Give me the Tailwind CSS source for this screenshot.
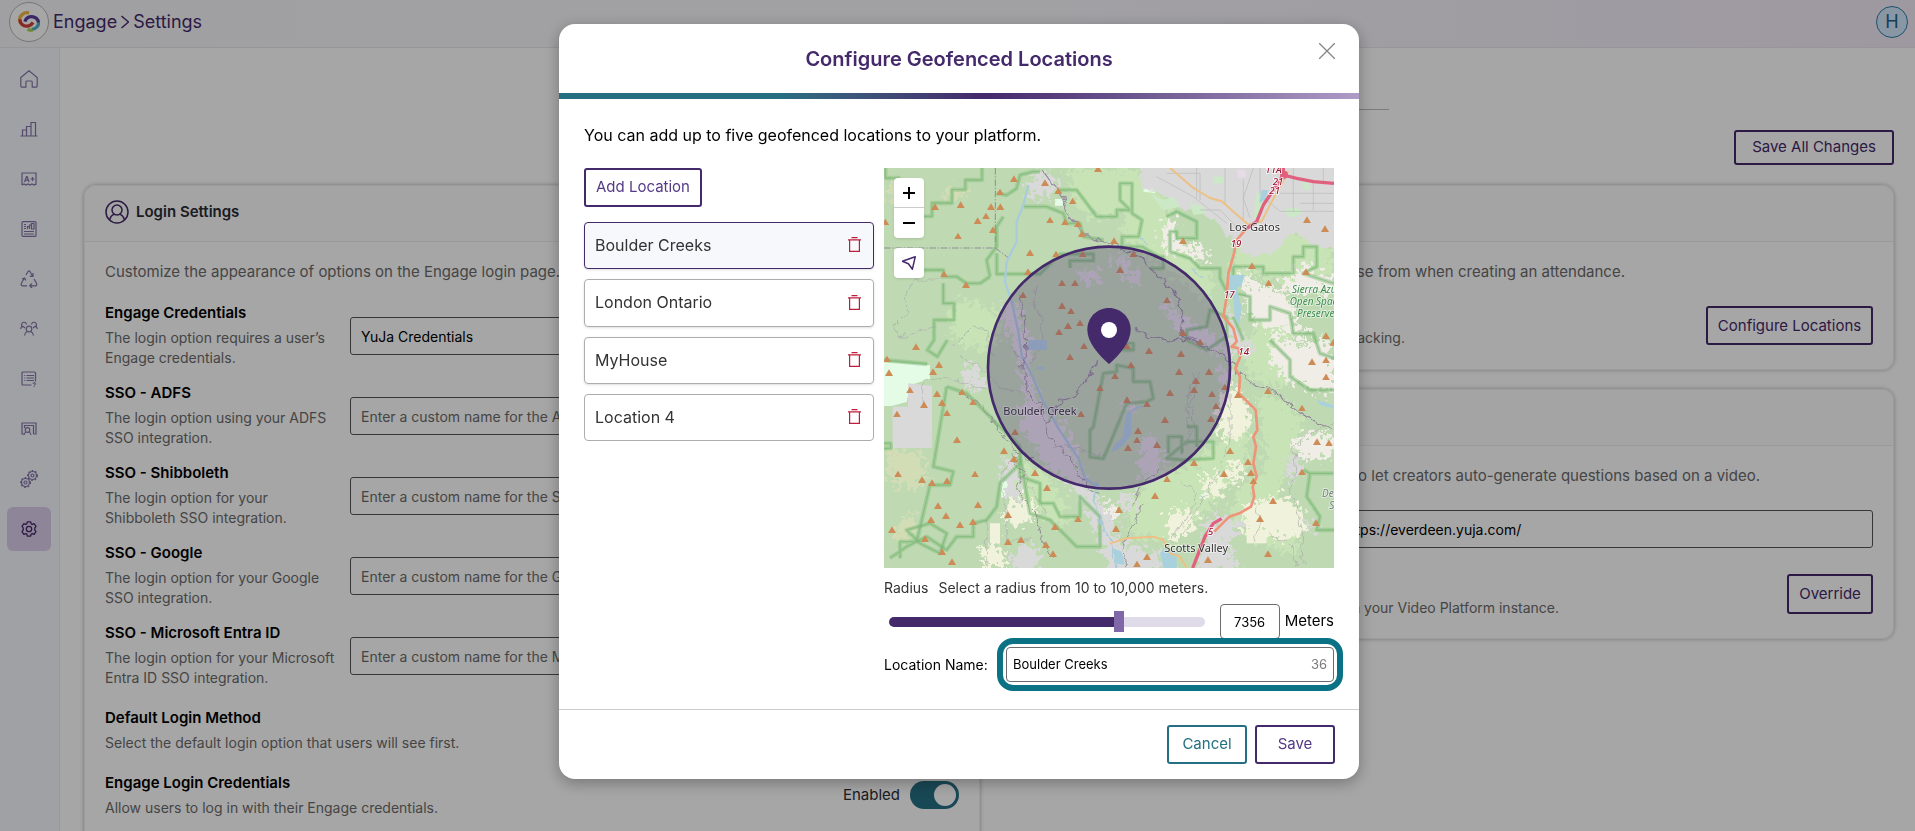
<!DOCTYPE html>
<html lang="en">
  <head>
    <meta charset="UTF-8" />
    <title>Engage - Settings</title>
    <script src="https://cdn.jsdelivr.net/npm/@tailwindcss/browser@4"></script>
  </head>
  <body class="flex h-screen flex-col overflow-hidden bg-white font-['Inter',sans-serif] text-black">
    <header class="flex h-12 shrink-0 items-center justify-between border-b border-[#e6e6ea] bg-linear-to-r from-[#f6f6fb] via-[#f8f8fc] to-[#f3ebf8] pr-[7px] pb-2.5 pl-[9px]">
      <div class="flex items-center gap-1 pt-1.5 text-lg text-[#44296b]">
        <a href="#" aria-label="Home" class="flex size-10 items-center justify-center rounded-full border border-[#b5b5b5] bg-white">
          <svg class="size-[22px]" viewBox="0 0 24 24" fill="none" stroke-width="3.6">
            <path d="M12 2C6 1 2 5 1.800 9c0 3 1.200 5 3.500 6" stroke="#f0b73c" />
            <path d="M2 9c0 5 4 8 8 7.500 3-.3 5-2 6.500-4" stroke="#d2403a" />
            <path d="M15 20c5-.5 8-4 7.500-9" stroke="#4fb0c6" />
            <path d="M16 20.500c-2 .5-4 .3-5.500-.5" stroke="#a5cf4c" />
            <path d="M7.500 11.500c1-4 5-6 9-5 3.500.8 5.500 3 5.700 6" stroke="#5b3d9b" />
          </svg>
        </a>
        <a href="#">Engage</a>
        <svg class="h-4 w-2" viewBox="0 0 8 16" fill="none" stroke="#44296b" stroke-width="1.500"><path d="M.5 2l7 6-7 6" /></svg>
        <span>Settings</span>
      </div>
      <button class="mt-1.5 flex size-8 items-center justify-center rounded-full border-[1.500px] border-[#2b7fa8] bg-[#d3e6fa] text-lg text-[#1f6086]">H</button>
    </header>

    <div class="flex min-h-0 flex-1">
      <nav class="flex w-[60px] shrink-0 flex-col items-center gap-1.5 border-r border-[#ececf0] bg-[#f4f7fd] pt-[9px] pr-px text-[#8474a8]">
        <a href="#" aria-label="Home" class="flex size-11 items-center justify-center">
          <svg class="size-[18px]" viewBox="0 0 18 18" fill="none" stroke="currentColor" stroke-width="1.200"><path d="M.8 7.500L9 .8l8.200 6.700v8.600a1 1 0 01-1 1h-4V12a1 1 0 00-1-1H6.900a1 1 0 00-1 1v5.100H1.800a1 1 0 01-1-1z" /></svg>
        </a>
        <a href="#" aria-label="Analytics" class="flex size-11 items-center justify-center">
          <svg class="size-[18px]" viewBox="0 0 18 18" fill="none" stroke="currentColor" stroke-width="1.200"><path d="M.5 16h17M2.500 16v-6h4v6M6.500 16V6.500h4.500V16M11 16V2.500h4.500V16" /></svg>
        </a>
        <a href="#" aria-label="Gradebook" class="flex size-11 items-center justify-center">
          <svg class="size-4" viewBox="0 0 16 16" fill="none" stroke="currentColor" stroke-width="1.200"><path d="M1 14V2h14v12M1 14l2-1 2 1 2-1 2 1 2-1 2 1 2-1M3.500 11l2-5.500h.6l2 5.500M4.200 9.200h3.200M9.500 8h4M11.500 6v4" /></svg>
        </a>
        <a href="#" aria-label="Reports" class="flex size-11 items-center justify-center">
          <svg class="size-4" viewBox="0 0 16 16" fill="none" stroke="currentColor" stroke-width="1.200"><rect x="1" y=".6" width="14" height="14.800" rx="1" /><path d="M3 3.500h2M3 5.500h2M3 7.500h2M6.500 8V5.500h2V8M8.500 8V4h2v4M10.500 8V2.500H13V8zM3 10.500h10M3 13h10" /></svg>
        </a>
        <a href="#" aria-label="Recycle" class="flex size-11 items-center justify-center">
          <svg class="size-[18px]" viewBox="0 0 18 18" fill="none" stroke="currentColor" stroke-width="1.200"><path d="M6 5l2-3.500q1-1.200 2 0L12.500 6M13 3v3.300H9.800M4.500 8L1.500 13q-1 2.500 1 2.800H7M2 9l2.700-1 1 2.500M14 9l2.500 4.200q.8 2.600-1.500 2.600H10M12 13.500l-2.300 2.300L12 18" /></svg>
        </a>
        <a href="#" aria-label="Groups" class="flex size-11 items-center justify-center">
          <svg class="size-[18px]" viewBox="0 0 18 18" fill="none" stroke="currentColor" stroke-width="1.200"><circle cx="9" cy="9" r="2.800" /><path d="M4.500 15.500q.5-3 2.700-4M13.500 15.500q-.5-3-2.700-4M2.200 6.500A2.500 2.500 0 116.500 4.500M15.800 6.500a2.500 2.500 0 10-4.300-2M.6 9q.2-2.300 2.400-2.600L5 8M17.400 9q-.2-2.300-2.400-2.600L13 8" /></svg>
        </a>
        <a href="#" aria-label="Quizzes" class="flex size-11 items-center justify-center">
          <svg class="size-4" viewBox="0 0 16 16" fill="none" stroke="currentColor" stroke-width="1.200"><path d="M10.500 14H2a1 1 0 01-1-1V2a1 1 0 011-1h11.500a1 1 0 011 1v8.500M3.200 4.500h1M5.500 4.500H13M3.200 7h1M5.500 7H13M3.200 9.500h1M5.500 9.500H13M11.800 12.500q1.500-1.500 2.500 0 .3 1-1 1.500M13.200 14.800v1" /></svg>
        </a>
        <a href="#" aria-label="Classroom" class="flex size-11 items-center justify-center">
          <svg class="size-4" viewBox="0 0 16 16" fill="none" stroke="currentColor" stroke-width="1.200"><path d="M3.500 13H1V2h14v11h-2.500M12.500 13V4.500h-9V7" /><circle cx="6.500" cy="9" r="2.300" /><path d="M3 14q.5-2.500 2-3M10 14q-.5-2.500-2-3" /></svg>
        </a>
        <a href="#" aria-label="Integrations" class="flex size-11 items-center justify-center">
          <svg class="size-[18px]" viewBox="0 0 18 18" fill="none" stroke="currentColor" stroke-width="1.200"><circle cx="12.500" cy="5.500" r="4" /><circle cx="12.500" cy="5.500" r="1.500" /><circle cx="5.500" cy="12.500" r="4" /><circle cx="5.500" cy="12.500" r="1.500" /><g stroke-dasharray="1.700 1.900"><circle cx="12.500" cy="5.500" r="4.900" /><circle cx="5.500" cy="12.500" r="4.900" /></g></svg>
        </a>
        <a href="#" aria-label="Settings" class="flex size-11 items-center justify-center rounded-md bg-[#dccdea] text-[#44296b]">
          <svg class="size-4" viewBox="0 0 16 16" fill="none" stroke="currentColor" stroke-width="1.300" stroke-linejoin="round"><circle cx="8" cy="8" r="2.700" /><path d="M6.300.9h3.400l.5 1.900 1.200.6 1.700-.7 1.900 2.600-1.200 1.500v2.400l1.200 1.500-1.900 2.600-1.700-.7-1.200.6-.5 1.900H6.300l-.5-1.900-1.200-.6-1.700.7L1 10.700l1.200-1.500V6.800L1 5.300l1.900-2.600 1.700.7 1.200-.6z" /></svg>
        </a>
      </nav>

      <main class="min-w-0 flex-1 overflow-hidden pr-[21px] pl-6 text-[15px] leading-6">
        <div class="mx-auto h-[62px] w-full max-w-[800px] border-b border-[#bdbdbd]"></div>
        <div class="mt-5 flex justify-end">
          <button class="flex h-[35px] w-40 items-center justify-center rounded-[3px] border-2 border-[#44296b] pb-0.5 text-[#44296b]">Save All Changes</button>
        </div>
        <div class="mt-5 grid grid-cols-2 items-start gap-[18px]">
          <section class="overflow-hidden rounded-xl border border-[#f0f0f0] pb-10 shadow-[0_0_4px_rgba(0,0,0,0.3)]">
            <h2 class="flex h-14 items-center gap-[7px] border-b border-[#ededed] bg-[#fcfcfc] px-5 pb-1 font-semibold text-[#2b2b33]">
              <svg class="size-6" viewBox="0 0 24 24" fill="none" stroke="#44296b" stroke-width="1.500"><circle cx="12" cy="12" r="11" /><circle cx="12" cy="10" r="5" /><path d="M4.500 20c1-3.500 3-5.300 5-5.700M19.500 20c-1-3.500-3-5.300-5-5.700" /></svg>
              Login Settings
            </h2>
            <div class="px-5 pt-[18px]">
              <p class="text-[#6b6b6b]">Customize the appearance of options on the Engage login page.</p>
              <div class="mt-[18px] flex flex-col gap-3.5">
                <div class="grid grid-cols-[245px_1fr] items-center">
                  <div>
                    <label for="engage-name" class="block leading-[22px] font-semibold">Engage Credentials</label>
                    <p class="mt-1 max-w-[232px] text-sm leading-5 text-[#6b6b6b]">The login option requires a user’s Engage credentials.</p>
                  </div>
                  <input id="engage-name" type="text" value="YuJa Credentials" class="mt-0.5 h-[38px] w-full rounded-[3px] border border-[#555] px-2.5 text-sm" />
                </div>
                <div class="grid grid-cols-[245px_1fr] items-center">
                  <div>
                    <label for="adfs-name" class="block leading-[22px] font-semibold">SSO - ADFS</label>
                    <p class="mt-1 max-w-[232px] text-sm leading-5 text-[#6b6b6b]">The login option using your ADFS SSO integration.</p>
                  </div>
                  <input id="adfs-name" type="text" placeholder="Enter a custom name for the ADFS" class="mt-0.5 h-[38px] w-full rounded-[3px] border border-[#555] px-2.5 text-sm placeholder:text-[#6b6b6b]" />
                </div>
                <div class="grid grid-cols-[245px_1fr] items-center">
                  <div>
                    <label for="shibboleth-name" class="block leading-[22px] font-semibold">SSO - Shibboleth</label>
                    <p class="mt-1 max-w-[232px] text-sm leading-5 text-[#6b6b6b]">The login option for your<br />Shibboleth SSO integration.</p>
                  </div>
                  <input id="shibboleth-name" type="text" placeholder="Enter a custom name for the Shibboleth" class="mt-0.5 h-[38px] w-full rounded-[3px] border border-[#555] px-2.5 text-sm placeholder:text-[#6b6b6b]" />
                </div>
                <div class="grid grid-cols-[245px_1fr] items-center">
                  <div>
                    <label for="google-name" class="block leading-[22px] font-semibold">SSO - Google</label>
                    <p class="mt-1 max-w-[232px] text-sm leading-5 text-[#6b6b6b]">The login option for your Google SSO integration.</p>
                  </div>
                  <input id="google-name" type="text" placeholder="Enter a custom name for the Google" class="mt-0.5 h-[38px] w-full rounded-[3px] border border-[#555] px-2.5 text-sm placeholder:text-[#6b6b6b]" />
                </div>
                <div class="grid grid-cols-[245px_1fr] items-center">
                  <div>
                    <label for="entra-name" class="block leading-[22px] font-semibold">SSO - Microsoft Entra ID</label>
                    <p class="mt-1 max-w-[232px] text-sm leading-5 text-[#6b6b6b]">The login option for your Microsoft Entra ID SSO integration.</p>
                  </div>
                  <input id="entra-name" type="text" placeholder="Enter a custom name for the Microsoft" class="mt-0.5 h-[38px] w-full rounded-[3px] border border-[#555] px-2.5 text-sm placeholder:text-[#6b6b6b]" />
                </div>
              </div>
              <h3 class="mt-[19px] leading-[22px] font-semibold">Default Login Method</h3>
              <p class="mt-1 text-sm leading-5 text-[#6b6b6b]">Select the default login option that users will see first.</p>
              <div class="mt-[19px] flex items-center justify-between">
                <div>
                  <h3 class="leading-[22px] font-semibold">Engage Login Credentials</h3>
                  <p class="mt-1 text-sm leading-5 text-[#6b6b6b]">Allow users to log in with their Engage credentials.</p>
                </div>
                <label class="flex items-center gap-2.5 text-[#2b2b33]">
                  Enabled
                  <input type="checkbox" checked class="h-7 w-[49px] appearance-none rounded-full bg-[#266f83] p-[3px] before:ml-auto before:block before:size-[22px] before:rounded-full before:bg-white" />
                </label>
              </div>
            </div>
          </section>

          <div class="flex flex-col gap-[19px]">
            <section class="overflow-hidden rounded-xl border border-[#f0f0f0] pb-[21px] shadow-[0_0_4px_rgba(0,0,0,0.3)]">
              <div class="h-14 border-b border-[#ededed] bg-[#fcfcfc]"></div>
              <div class="px-5 pt-[18px]">
                <p class="mr-[248px] text-right text-[#6b6b6b]">choose from when creating an attendance.</p>
                <div class="mt-[22px] flex items-start justify-end">
                  <p class="mt-[22px] mr-[301px] text-sm leading-5 text-[#6b6b6b]">tracking.</p>
                  <button class="flex h-[39px] w-[167px] items-center justify-center rounded-[3px] border-2 border-[#44296b] text-[#44296b]">Configure Locations</button>
                </div>
              </div>
            </section>
            <section class="overflow-hidden rounded-xl border border-[#f0f0f0] pb-5 shadow-[0_0_4px_rgba(0,0,0,0.3)]">
              <div class="h-14 border-b border-[#ededed] bg-[#fcfcfc]"></div>
              <div class="px-5 pt-[18px]">
                <p class="mr-[113px] text-right text-[#6b6b6b]">to let creators auto-generate questions based on a video.</p>
                <div class="mt-[22px] flex justify-end">
                  <input type="text" aria-label="Video Platform URL" value="https://everdeen.yuja.com/" class="h-[38px] w-[541px] rounded-[3px] border border-[#555] px-2.5 text-sm" />
                </div>
                <div class="mt-[26px] flex items-start justify-end">
                  <p class="mt-6 mr-[228px] text-sm leading-5 text-[#6b6b6b]">in your Video Platform instance.</p>
                  <button class="flex h-10 w-[86px] items-center justify-center rounded-[3px] border-2 border-[#44296b] text-[#44296b]">Override</button>
                </div>
              </div>
            </section>
          </div>
        </div>
      </main>
    </div>

    <!-- Modal -->
    <div class="fixed inset-0 flex items-start justify-center bg-black/35 pt-6 pl-[3px]">
      <div role="dialog" aria-modal="true" aria-labelledby="dialog-title" class="w-full max-w-[800px] rounded-2xl bg-white shadow-[0_4px_16px_rgba(0,0,0,0.3)]">
        <div class="grid h-[69px] grid-cols-[1fr_auto_1fr] items-center px-6">
          <h1 id="dialog-title" class="col-start-2 text-xl font-semibold text-[#44296b]">Configure Geofenced Locations</h1>
          <button aria-label="Close" class="mb-4 justify-self-end">
            <svg class="size-4" viewBox="0 0 16 16" stroke="#858585" stroke-width="1.300"><path d="M0 0l16 16M16 0L0 16" /></svg>
          </button>
        </div>
        <div class="h-1.5 bg-linear-to-r from-[#266f83] from-27% via-[#44296b] via-53% to-[#ad9cc6]"></div>

        <div class="px-[25px] pt-6 pb-[27px]">
          <p>You can add up to five geofenced locations to your platform.</p>
          <div class="mt-[21px] grid grid-cols-[290px_1fr] items-start gap-2.5">
            <div>
              <button class="flex h-[39px] w-[118px] items-center justify-center rounded-[3px] border-2 border-[#44296b] text-[15px] text-[#553a85]">Add Location</button>
              <ul class="mt-[15px] flex flex-col gap-2.5 text-base text-[#333]">
                <li class="flex h-[47px] items-center justify-between rounded-sm border border-[#44296b] bg-[#f7f8fb] pr-3 pb-0.5 pl-2.5 shadow-sm">
                  Boulder Creeks
                  <button aria-label="Delete Boulder Creeks"><svg class="h-[15px] w-[13px]" viewBox="0 0 13 15" fill="none" stroke="#be1e3c" stroke-width="1.200"><path d="M3.500.7h6M0 2.800h13M1.600 3v11.300h9.800V3" /></svg></button>
                </li>
                <li class="flex h-12 items-center justify-between rounded-sm border border-[#adadad] pr-3 pb-0.5 pl-2.5 shadow-sm">
                  London Ontario
                  <button aria-label="Delete London Ontario"><svg class="h-[15px] w-[13px]" viewBox="0 0 13 15" fill="none" stroke="#be1e3c" stroke-width="1.200"><path d="M3.500.7h6M0 2.800h13M1.600 3v11.300h9.800V3" /></svg></button>
                </li>
                <li class="flex h-[47px] items-center justify-between rounded-sm border border-[#adadad] pr-3 pb-0.5 pl-2.5 shadow-sm">
                  MyHouse
                  <button aria-label="Delete MyHouse"><svg class="h-[15px] w-[13px]" viewBox="0 0 13 15" fill="none" stroke="#be1e3c" stroke-width="1.200"><path d="M3.500.7h6M0 2.800h13M1.600 3v11.300h9.800V3" /></svg></button>
                </li>
                <li class="flex h-[47px] items-center justify-between rounded-sm border border-[#adadad] pr-3 pb-0.5 pl-2.5">
                  Location 4
                  <button aria-label="Delete Location 4"><svg class="h-[15px] w-[13px]" viewBox="0 0 13 15" fill="none" stroke="#be1e3c" stroke-width="1.200"><path d="M3.500.7h6M0 2.800h13M1.600 3v11.300h9.800V3" /></svg></button>
                </li>
              </ul>
            </div>

            <div>
              <div class="relative">
                <svg class="block w-full" viewBox="12 24 1350 1200" fill="none">
                  <defs>
                    <marker id="peak" markerUnits="userSpaceOnUse" markerWidth="24" markerHeight="20" refX="12" refY="10"><path d="M12 0L24 20H0z" fill="#cd8b56" /></marker>
                    <filter id="ragged" x="-10%" y="-10%" width="120%" height="120%">
                      <feTurbulence type="fractalNoise" baseFrequency="0.06" numOctaves="3" seed="4" />
                      <feDisplacementMap in="SourceGraphic" scale="90" xChannelSelector="R" yChannelSelector="G" />
                    </filter>
                    <filter id="wavy" x="-10%" y="-10%" width="120%" height="120%">
                      <feTurbulence type="fractalNoise" baseFrequency="0.04" numOctaves="2" seed="9" />
                      <feDisplacementMap in="SourceGraphic" scale="30" xChannelSelector="R" yChannelSelector="G" />
                    </filter>
                    <!-- park boundaries -->
                    <g id="parks">
                      <path d="M16 24v30h40v100l40 15h60v-40h60v-40h40V60h50V24M350 100l30 5 30-20 10-40 40-10 20 0" />
                      <path d="M430 140l70 0 50 20 10 30 40 0 10 40 60 10M350 280v62h130l60-60h100v20h-70v22M540 90l50 0 60 80 60 0v-20h40l-30-30v-50h36v90l30 20-10 50h-50v30h60l50 30" />
                      <path d="M860 170l30-15 60 30v50h-60v-20l-20 0v60l60 20 30 30h60v30l20 40" />
                      <path d="M1060 320h90v20h90v-50h30v-30h40v60l-40 20 90 30M1060 320v80l50 10v70h60v-40l60 20 10 60h60l20 60 60 20M1060 470l30 70M1170 540l60 60v50l60 40h72" />
                      <path d="M12 600l130 12M200 680l-40 240 60 15-10 40-60 0-40 170-50 0 0 50M200 680l60 20 100 100 60 60v50l-60 60-10 70-30 40-40 10v40h-50l-30 40-60-40-60 30-50 34" />
                      <path d="M330 350l-30 20-40 0-30-20h-40v-20h-60M190 370v60h32v50h-60v60l-20 30 30 20 30-50M330 350l-10-50 30-40v-60l20-30" />
                      <path d="M420 890v60l60 20v60h40l20 40h60v-60l60 60v90h-70l-40-40-40-40-60-20z" />
                      <path d="M670 640l40-5v-20l50 10v40h50l10 50-20 10-60 5-50 120-20 46-40-5v-80l10-10zM730 550h30v20h-30zM860 895l60-50h80v50l-90 5zM865 880v-50h40v50M920 800h30v60" />
                      <path d="M920 540v-30l60-10 10-50 50 20 0 60-60 40zM820 290l30 0 0 35-40 0M1270 930l20 10 70 0M1290 940l-10 70 40 60-10 40 52 0M12 850l20 0 0 15-20 0M80 1110l70-20 50 30-20 60-60-30z" />
                    </g>
                  </defs>
                  <rect x="12" y="24" width="1350" height="1200" fill="#bfdab3" />

                  <g filter="url(#ragged)">
                    <!-- scrub and open ground -->
                    <g fill="#c8e4b6">
                      <path d="M560 24h200l60 40 60 90-60 60-90-60-80 20-60-30zM230 420l80 10 60 60-40 90-90-30-40-60z" />
                      <path d="M790 60l90 130-30 40 100 80 60 60-30 60-80-80-110-60-70-80zM1070 240l100-60 192 90v110l-130-10-120-40-60 60zM1090 560l60-90 90 50 30 130-70 40-100-50z" />
                      <path d="M400 900l90 30 60 90 20 60-30 20-80-60-60-60zM1040 700l70 60-10 150-60 80-90 100-80 60-120-30 10-90 60-90 120-30 80-60zM1130 700l80 20 60 60-40 110-40 120 70 60-10 110-120-30-80-70 20-90 90-60z" />
                    </g>
                    <g fill="#f0ede6">
                      <path d="M860 170l30 20-10 30 50 40 20-20 40 50-30 10-50-20-40 10-30-50zM1090 330l60 50 50 10 50 60-20 20 50 40-20 30-60-40-50 10-50-60zM1180 520l60 30 90-10 32 40v110l-50 10-40-30-60-10-40-60zM1200 370l80-60 60 50 22-20v60l-70-10-60 20z" />
                      <path d="M1250 830l70-20 42 30v50l-60 10-60-20zM640 1040l60-10 20 40-60 20z" />
                    </g>
                    <g fill="#f1f2dc">
                      <path d="M1040 680l40 10 30 80-20 60-60 10-20-60zM1090 1030l130-20 60 50-20 70-70 10-60-30-40 20zM860 1070l50-30 40 30-20 50-60 20zM410 1010l50 20 10 50-60 10-50-20zM300 1160l60-10 20 74h-70zM960 960l60-20 20 50-50 30zM1050 900l40 10-10 60-40-10z" />
                    </g>
                    <g fill="#d2ddb5"><path d="M24 860l90 20 30 60-50 50-70-30zM60 1080l40-20 20 50-50 40-30-20zM30 60l60 0 40 40-60 30-50-20zM200 80l60 10-10 30-60-10z" /></g>
                  </g>

                  <!-- fields -->
                  <path fill="#f1f2dc" d="M1050 760h36v70h-36zM870 1080h40v40h-40zM1140 1030h90v30h-90zM1100 1110h60v40h-60zM390 1060h40v30h-40zM330 1090h30v60h-30z" />
                  <path fill="#e4fbe6" d="M12 606l138 10v40l-60 20-10 50-45 12H12zM525 117h26v20h-26zM795 65l40 5-10 30-35-5zM360 960l25 5-5 40-15 10zM965 1000l15-5-5 25-15-5z" />
                  <path fill="#d9d9d9" d="M38 740h46v-70l72 8v186H38z" />

                  <!-- built-up areas -->
                  <path fill="#d9d9d9" filter="url(#wavy)" d="M770 0h612v270l-80-10-60-50-60 70-80 10-50-60-60-60-90-30-60-40-60-20z" />
                  <g fill="#d9d9d9" filter="url(#ragged)">
                    <path d="M455 50l40-20 35 30-5 45-30-10-15 25-30-15zM1040 430l30 60 50 60-10 40-40-10-30-60z" />
                    <path d="M360 440l50-20 20 100 30 10-10 100 10 60 50 80 60 60 30 110 40 60-20 40-40-60-80-60-60-80-20-60 20-80-20-70zM240 630l40-20 40 50-20 40-40-20zM370 890l40 10 10 110-30 10-20-60zM600 980l50 30 50 70 10 60 80 30 60 20 40 50H700l-40-90zM970 1090l70-30 50 40-50 50 40 84H950l20-100z" />
                    <path d="M410 1150l60 10 10 50-50 34h-40zM780 830l50 0 20 90-50 60-20-60zM1230 880l40 20-20 60-30-10zM1270 1080l50 5-10 25-30-5zM700 290l40 0 40 70-30 20zM730 1000l30-10 0 60-30 10z" />
                    <path d="M600 320l50 10 20 40-60 0zM860 410l50 70 60 20 80 70-20 20-110-50-70-90zM500 780l50 0 20 50-40 20zM720 730l40 0 10 20-40 10zM1010 620l40 10 0 50-30-10z" />
                  </g>
                  <g fill="#cbe9c6"><path d="M1130 100l30-10-20 70-20 20zM810 100l40 20 30-10 20 30-50 10zM930 130l40 10 10 20-40 5zM1210 150l40-10 20 20-40 15zM1000 50l30 0 0 20-30 0zM1270 60l20 0 0 30-20 0z" /></g>
                  <g fill="#e6dbe6"><path d="M1070 30l25 0 5 20-25 5zM1185 50l20 30-10 20-15-25z" /></g>

                  <!-- street grid -->
                  <g stroke="#b9b9b9" stroke-width="2">
                    <path d="M860 40l100 0v80M950 24v90M1035 24v110M1090 60v120M1140 24v80l60 50h162M1240 24v130M1300 60v90M1330 24v50M1200 100h162M1260 130h102M830 50l110 60 100 80M960 150l60 0 70 70M1120 24l-30 90 20 60" />
                  </g>
                  <g stroke="#ababab" stroke-width="2" filter="url(#wavy)">
                    <path d="M80 390l30-30h80M80 390l0 70-40 40 20 30 60-20 50-10M130 740v-80l60-5 40 5 90 30M220 560l60-60 40 10 20 70M240 590l60 30 60 60 60 20M390 560l50 60 30-30 20-90-30-80 10-40M940 640l-20 90 10 120" />
                    <path d="M400 890l-40 60 10 80 20 40M420 880l20 90 60 90M520 860l90 10 70 20M960 640l-30 90 10 90-40 60M1050 700l0 140-30 90-60 100-50 90M1360 790l-60 20-60 50 10 70-20 60 30 80 10 140M1110 1000l30 80-20 70M900 960l50 40-20 60-60 80M320 1080v140M380 1080v60h80M1170 1130l60 20 20 70" />
                  </g>

                  <use href="#parks" stroke="#82bd7c" stroke-opacity=".45" stroke-width="13" stroke-linejoin="round" />
                  <use href="#parks" stroke="#78b574" stroke-opacity=".6" stroke-width="4" stroke-linejoin="round" />
                  <g stroke="#8f8f97" stroke-width="3" stroke-dasharray="20 5 4 5"><path d="M346 24v240M12 264h334M346 264l40 30" /></g>

                  <!-- water -->
                  <g stroke="#a9cbdc" stroke-width="5" stroke-linejoin="round">
                    <path d="M445 75l-15 60-20 50 0 60-30 60-5 60 20 60 20 90 10 70 30 60 30 70 50 90 60 90 20 60 30 20" stroke-width="7" />
                    <path d="M650 970l-10 50 20 60 30 60 20 84M780 235l20 20M940 330l30 20" filter="url(#wavy)" />
                  </g>
                  <path fill="#a9d0dd" d="M1050 345l45 0-10 30-15 10 15 60-8 50-12-20-5-60-15-20zM692 880l12-25 25-25 10-70 30-20 30-5-45 20 0 70-30 35zM1145 90l20 0-10 30-18 10zM1310 720l50 15v10l-40-10zM445 540h55v30h-55zM470 620l25 0-10 10-20-5zM840 1180l20-20 30 20 0 44h-40zM700 1165l25 10 10 40-30-5z" />

                  <!-- roads -->
                  <g stroke="#968c9e" stroke-width="4" stroke-linejoin="round" filter="url(#wavy)">
                    <path d="M490 36l50 60 30 80 40 40 40 25 50 10 80 40 50 50 60 70 20 50-10 60 60 30 50 20 60 60 60 50 60 20 70 60 100 50M760 502l50 30 80 10 60-10M500 792l30-60 60-30 40-60 20-40" />
                    <path d="M420 410l10 60 10 130-15 20 20 70 40 60 20 80 60 60 50 90 40 20" stroke-width="3" />
                  </g>
                  <g stroke="#929292" stroke-width="3" filter="url(#wavy)"><path d="M240 700l60 30 60 80 40 60 60 30M790 1030l-30 60-30 60 10 74M760 1040l20-60 60-50M390 880l40 60-20 50 50 60 30 90 30 60" /></g>
                  <g stroke="#eec083" stroke-width="6" stroke-linejoin="round"><path d="M870 24l70 60 50 30 35 10 80 70 40-10 20-40 60-110M690 1150l50-15 80-5 30 10 20 40 30 10 20 34" /></g>
                  <g stroke="#ee9478" stroke-width="8" stroke-linejoin="round"><path d="M1100 205l-30 35-8 40-17 60-5 70-10 60 30 35 10 40-15 15 20 5 6 25-15 35 14 25-3 50 50 50 5 60-12 20 8 30-8 50 10 40-12 30 5 30-10 30-35 20-30 10-45 45" /></g>
                  <g stroke="#e0607e" stroke-width="10" stroke-linejoin="round"><path d="M1100 205l30-20 20-50 40-60 20-30 40 10 50 10 62 5M1210 24v20M1025 1076l-25 14-25 40-37 94" /></g>
                  <circle cx="1212" cy="44" r="12" fill="#e0607e" />

                  <polyline stroke="none" marker-start="url(#peak)" marker-mid="url(#peak)" marker-end="url(#peak)" points="654,26 402,56 495,68 535,92 360,96 165,140 242,134 333,140 361,140 318,168 293,182 339,209 234,228 16,186 578,123 510,180 555,186 594,191 606,221 702,242 909,242 1281,179 1335,206 450,278 528,282 608,282 760,282 444,335 192,342 258,374 720,329 1116,317 1278,335 1166,369 546,369 585,369 429,405 861,420 546,437 573,453 600,489 564,497 537,516 909,518 960,546 612,558 741,558 570,591 807,572 903,581 753,615 1338,527 1360,547 1296,605 1338,600 1338,651 108,560 21,597 27,638 177,614 159,635 705,648 897,635 987,635 948,662 942,689 660,684 1035,681 870,698 996,702 1074,704 1164,692 90,690 171,701 186,728 246,696 279,726 132,734 201,759 51,762 741,719 801,732 1008,738 1266,744 993,776 855,779 603,762 231,839 405,816 774,812 771,840 744,863 831,854 372,872 402,896 1050,872 1311,845 1347,849 942,908 54,942 126,959 156,968 201,962 285,942 465,938 501,983 861,957 1032,941 1104,905 1113,938 1120,963 1266,936 825,1007 174,1037 294,1034 198,1067 153,1079 240,1094 279,1085 384,1064 36,1109 717,1049 594,1077 525,1100 708,1106 1179,1022 1140,1076 1308,1088 135,1136 423,1139 384,1145 498,1154 186,1175 519,1181 216,1205 801,1190 771,1212 984,1199 1164,1181" />

                  <g font-family="'Noto Sans', sans-serif" font-size="33" fill="#2f2f2f" stroke="#ffffff" stroke-opacity=".6" stroke-width="5" paint-order="stroke">
                    <text x="1048" y="213">Los Gatos</text>
                    <text x="370" y="765">Boulder Creek</text>
                    <text x="853" y="1176">Scotts Valley</text>
                    <g font-style="italic" font-size="30" fill="#3a8c4c">
                      <text x="1236" y="398">Sierra Azul</text>
                      <text x="1229" y="434">Open Space</text>
                      <text x="1251" y="470">Preserve</text>
                      <g fill="#6f8078"><text x="1326" y="1012">De L</text><text x="1348" y="1047">Sta</text></g>
                    </g>
                    <g font-style="italic" font-size="29" font-weight="500" fill="#9c1535" stroke-opacity=".9">
                      <text x="1156" y="39">11A</text>
                      <text x="1178" y="75">21</text>
                      <text x="1168" y="103">21</text>
                      <text x="1052" y="261">19</text>
                      <text x="1032" y="413">17</text>
                      <text x="1075" y="585">14</text>
                      <text x="984" y="1125">5</text>
                    </g>
                  </g>

                  <circle cx="687" cy="623" r="363" fill="#44296b" fill-opacity=".3" stroke="#44296b" stroke-width="8" />
                  <path fill="#44296b" d="M687 444c36 0 65 29 65 65 0 38-34 76-65 103-31-27-65-65-65-103 0-36 29-65 65-65z" />
                  <circle cx="687" cy="510" r="24" fill="#fff" />
                </svg>
                <div class="absolute top-2.5 left-2.5 flex w-[30px] flex-col gap-2.5">
                  <div class="flex flex-col divide-y divide-[#ccc] rounded-sm bg-white shadow">
                    <button aria-label="Zoom in" class="flex h-[30px] items-center justify-center"><svg class="size-3" viewBox="0 0 12 12" stroke="#000" stroke-width="2"><path d="M0 6h12M6 0v12" /></svg></button>
                    <button aria-label="Zoom out" class="flex h-[30px] items-center justify-center"><svg class="size-3" viewBox="0 0 12 12" stroke="#000" stroke-width="2"><path d="M0 6h12" /></svg></button>
                  </div>
                  <button aria-label="My location" class="flex h-[30px] items-center justify-center rounded-sm bg-white shadow"><svg class="size-3.5" viewBox="0 0 14 14" fill="none" stroke="#44296b" stroke-width="1.500" stroke-linejoin="round"><path d="M13.200.8L.4 5.200l6 2.600 4 5.400z" /></svg></button>
                </div>
              </div>

              <div class="mt-2.5 flex gap-2.5 text-sm text-[#333]">
                <label for="radius">Radius</label>
                <p>Select a radius from 10 to 10,000 meters.</p>
              </div>
              <div class="mt-1.5 flex items-center">
                <input id="radius" type="range" min="10" max="10000" value="7356" class="mr-[15px] ml-[5px] h-2.5 min-w-0 flex-1 appearance-none rounded-full bg-linear-to-r from-[#44296b] from-73% to-[#e0dbe9] to-73% [&::-webkit-slider-thumb]:h-[21px] [&::-webkit-slider-thumb]:w-2.5 [&::-webkit-slider-thumb]:appearance-none [&::-webkit-slider-thumb]:bg-[#8068a8]" />
                <input id="meters" type="text" value="7356" class="h-[35px] w-[60px] rounded-sm border border-[#6b6b6b] text-center text-[13px]" />
                <label for="meters" class="ml-[5px] text-[15px]">Meters</label>
              </div>
              <div class="mt-2 flex items-center justify-between">
                <label for="location-name" class="text-sm">Location Name:</label>
                <div class="relative flex h-[35px] w-[328px] items-center rounded-sm border border-[#6b6b6b] px-1.5">
                  <input id="location-name" type="text" value="Boulder Creeks" class="min-w-0 flex-1 text-[13px]" />
                  <span class="text-[13px] text-[#7b7b7b]">36</span>
                  <div class="pointer-events-none absolute -inset-2.5 rounded-2xl border-6 border-[#0b7285]"></div>
                </div>
              </div>
            </div>
          </div>
        </div>

        <div class="flex justify-end gap-2 border-t border-[#ccc] px-6 pt-[15px] pb-[15px] text-[15px]">
          <button class="h-[39px] w-20 rounded-[3px] border-2 border-[#266f83] text-[#266f83]">Cancel</button>
          <button class="h-[39px] w-20 rounded-[3px] border-2 border-[#44296b] text-[#553a85]">Save</button>
        </div>
      </div>
    </div>
  </body>
</html>
